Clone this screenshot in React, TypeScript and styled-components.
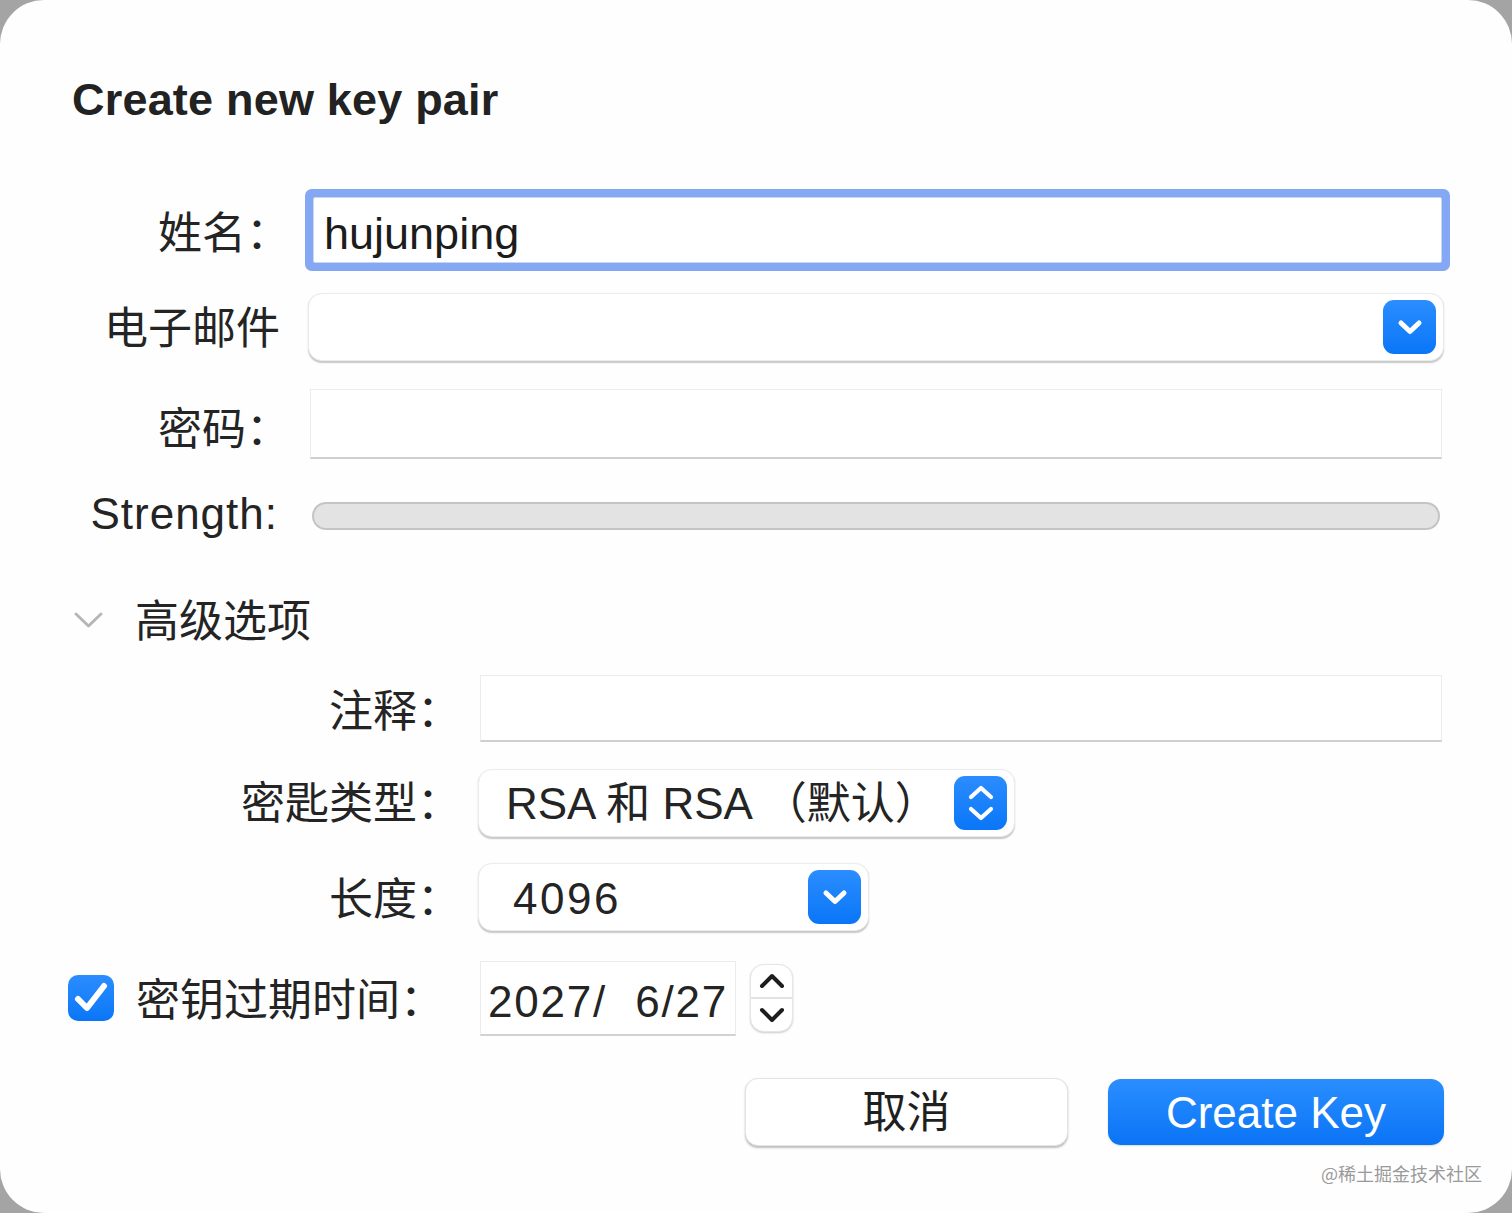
import React from "react";
import styled, { createGlobalStyle } from "styled-components";

const Global = createGlobalStyle`
  html, body {
    margin: 0;
    padding: 0;
    background: #a4a4a4;
    overflow: hidden;
  }
  * { box-sizing: border-box; }
`;

const FONT = `"Liberation Sans", "Noto Sans CJK SC", sans-serif`;

const Dialog = styled.div`
  position: relative;
  width: 1512px;
  height: 1213px;
  background: #fefefe;
  border-radius: 44px;
  padding: 0 68px 0 72px;
  display: flex;
  flex-direction: column;
  font-family: ${FONT};
  color: #242424;
  font-size: 44px;
`;

const Title = styled.h1`
  margin: 74px 0 0 0;
  font-size: 45px;
  line-height: 52px;
  font-weight: 700;
  color: #222;
  letter-spacing: 0.2px;
`;

const Row = styled.div<{ $h: number; $mt: number }>`
  display: flex;
  align-items: center;
  height: ${(p) => p.$h}px;
  margin-top: ${(p) => p.$mt}px;
`;

const Label = styled.div<{ $w: number; $pr?: number; $gap: number; $dy?: number; $ls?: number }>`
  width: ${(p) => p.$w}px;
  flex-shrink: 0;
  text-align: right;
  padding-right: ${(p) => p.$pr ?? 0}px;
  margin-right: ${(p) => p.$gap}px;
  white-space: nowrap;
  line-height: 1;
  letter-spacing: ${(p) => p.$ls ?? 0}px;
  ${(p) =>
    (p.$dy ?? 0) >= 0
      ? `padding-top: ${2 * (p.$dy ?? 0)}px;`
      : `padding-bottom: ${-2 * (p.$dy ?? 0)}px;`}
`;

const FocusInput = styled.div`
  flex: 1;
  height: 66px;
  margin: 1px 2px 0 2px;
  background: #fff;
  border: 1px solid #c9d6ee;
  box-shadow: 0 0 0 8px #84a8f4;
  border-radius: 2px;
  display: flex;
  align-items: center;
  padding: 8px 0 0 10px;
  font-size: 45px;
  color: #1c1c1c;
  line-height: 1;
`;

const PlainInput = styled.div<{ $h: number }>`
  flex: 1;
  height: ${(p) => p.$h}px;
  margin-right: 2px;
  background: #fff;
  border: 1px solid #ececec;
  border-bottom: 2px solid #cfcfcf;
`;

const Popup = styled.div<{ $w?: number; $pl: number }>`
  ${(p) => (p.$w ? `width: ${p.$w}px; flex-shrink: 0;` : "flex: 1;")}
  height: 68px;
  background: #fff;
  border-radius: 14px;
  border: 1px solid #ececec;
  box-shadow: 0 1.5px 1.5px rgba(0, 0, 0, 0.22);
  display: flex;
  align-items: center;
  justify-content: space-between;
  padding: 0 7px 0 ${(p) => p.$pl}px;
  white-space: pre;
  line-height: 1;
`;

const PopupText = styled.span<{ $dy?: number; $ls?: number }>`
  padding-top: ${(p) => 2 * (p.$dy ?? 0)}px;
  letter-spacing: ${(p) => p.$ls ?? 0}px;
`;

const BlueKnob = styled.div`
  width: 53px;
  height: 54px;
  border-radius: 11px;
  background: linear-gradient(180deg, #2b8dff 0%, #0a76f7 100%);
  display: flex;
  align-items: center;
  justify-content: center;
  flex-shrink: 0;
`;

const StrengthBar = styled.div`
  flex: 1;
  height: 28px;
  margin: 0 4px 0 4px;
  border-radius: 14px;
  background: #e3e3e3;
  border: 2px solid #c4c4c4;
`;

const Disclosure = styled.div`
  display: flex;
  align-items: center;
  height: 70px;
  margin-top: 34px;
  gap: 31px;
  padding-left: 1px;
`;

const DisclosureText = styled.span`
  line-height: 1;
  padding-top: 4px;
`;

const CheckLabel = styled.label`
  width: 412px;
  flex-shrink: 0;
  display: flex;
  align-items: center;
  gap: 22px;
  margin-left: -4px;
  line-height: 1;
  white-space: nowrap;
`;

const CheckText = styled.span`
  padding-top: 6px;
`;

const CheckBox = styled.div`
  width: 46px;
  height: 46px;
  border-radius: 10px;
  background: linear-gradient(180deg, #2b8dff 0%, #0a76f7 100%);
  display: flex;
  align-items: center;
  justify-content: center;
`;

const DateField = styled.div`
  width: 256px;
  height: 75px;
  background: #fff;
  border: 1px solid #ececec;
  border-bottom: 2px solid #d2d2d2;
  display: flex;
  align-items: center;
  padding: 8px 0 0 7px;
  white-space: pre;
  line-height: 1;
  letter-spacing: 1.8px;
`;

const Stepper = styled.div`
  width: 43px;
  height: 68px;
  margin-left: 14px;
  border-radius: 14px;
  border: 1px solid #e6e6e6;
  box-shadow: 0 1px 2px rgba(0, 0, 0, 0.2);
  background: #fff;
  display: flex;
  flex-direction: column;
`;

const StepHalf = styled.div<{ $top?: boolean }>`
  flex: 1;
  display: flex;
  align-items: center;
  justify-content: center;
  ${(p) => (p.$top ? "border-bottom: 2px solid #e2e2e2;" : "")}
`;

const ButtonRow = styled.div`
  display: flex;
  justify-content: flex-end;
  align-items: center;
  gap: 40px;
  margin-top: 42px;
`;

const Button = styled.button<{ $primary?: boolean }>`
  font-family: ${FONT};
  font-size: 44px;
  line-height: 1;
  height: ${(p) => (p.$primary ? 66 : 68)}px;
  width: ${(p) => (p.$primary ? 336 : 323)}px;
  border-radius: 13px;
  cursor: default;
  display: flex;
  align-items: center;
  justify-content: center;
  padding: 2px 0 0;
  ${(p) =>
    p.$primary
      ? `
    color: #fff;
    border: none;
    background: linear-gradient(180deg, #2a8eff 0%, #0a74f6 100%);
    box-shadow: 0 1px 2px rgba(0,0,0,0.15);
  `
      : `
    color: #1f1f1f;
    border: 1px solid #e4e4e4;
    background: #fff;
    box-shadow: 0 1.5px 2px rgba(0,0,0,0.25);
  `}
`;

const Watermark = styled.div`
  position: absolute;
  right: 30px;
  bottom: 31px;
  font-size: 18px;
  line-height: 1;
  color: #9a9a9a;
  font-family: "Noto Sans CJK SC", sans-serif;
`;

const KnobChevron = () => (
  <svg width="28" height="28" viewBox="0 0 28 28">
    <path d="M5 10 L14 18.5 L23 10" fill="none" stroke="#fff" strokeWidth="5" strokeLinecap="round" strokeLinejoin="round" />
  </svg>
);

const DisclosureChevron = () => (
  <svg width="31" height="20" viewBox="0 0 31 20">
    <path d="M3 4 L15.5 16 L28 4" fill="none" stroke="#b6b6b6" strokeWidth="3" strokeLinecap="round" strokeLinejoin="round" />
  </svg>
);

const StepChevron = ({ up }: { up?: boolean }) => (
  <svg width="26" height="22" viewBox="0 0 26 22">
    <path
      d={up ? "M3 16 L13 6 L23 16" : "M3 6 L13 16 L23 6"}
      fill="none"
      stroke="#1e1e1e"
      strokeWidth="4"
      strokeLinecap="round"
      strokeLinejoin="round"
    />
  </svg>
);

const UpDown = () => (
  <svg width="30" height="44" viewBox="0 0 30 44">
    <path d="M5 16 L15 7 L25 16" fill="none" stroke="#fff" strokeWidth="4.2" strokeLinecap="round" strokeLinejoin="round" />
    <path d="M5 28 L15 37 L25 28" fill="none" stroke="#fff" strokeWidth="4.2" strokeLinecap="round" strokeLinejoin="round" />
  </svg>
);

const Check = () => (
  <svg width="46" height="46" viewBox="0 0 46 46">
    <path d="M10 24 L19 33 L36 11" fill="none" stroke="#fff" strokeWidth="6" strokeLinecap="round" strokeLinejoin="round" />
  </svg>
);

const TOP_W = 218;
const TOP_GAP = 18;
const ADV_W = 389;
const ADV_GAP = 19;

export default function App() {
  return (
    <>
      <Global />
      <Dialog>
        <Title>Create new key pair</Title>

        <Row $h={70} $mt={68}>
          <Label $w={TOP_W} $gap={TOP_GAP + 3} $dy={5}>姓名：</Label>
          <FocusInput>hujunping</FocusInput>
        </Row>

        <Row $h={70} $mt={28}>
          <Label $w={TOP_W} $pr={10} $gap={TOP_GAP} $dy={2}>电子邮件</Label>
          <Popup $pl={0}>
            <span />
            <BlueKnob>
              <KnobChevron />
            </BlueKnob>
          </Popup>
        </Row>

        <Row $h={70} $mt={27}>
          <Label $w={TOP_W} $gap={TOP_GAP + 2} $dy={6}>密码：</Label>
          <PlainInput $h={70} />
        </Row>

        <Row $h={70} $mt={22}>
          <Label $w={TOP_W} $pr={12} $gap={TOP_GAP} $dy={-2} $ls={1}>Strength:</Label>
          <StrengthBar />
        </Row>

        <Disclosure>
          <DisclosureChevron />
          <DisclosureText>高级选项</DisclosureText>
        </Disclosure>

        <Row $h={70} $mt={18}>
          <Label $w={ADV_W} $gap={ADV_GAP} $dy={4}>注释：</Label>
          <PlainInput $h={67} />
        </Row>

        <Row $h={70} $mt={25}>
          <Label $w={ADV_W} $gap={ADV_GAP - 2} $dy={1}>密匙类型：</Label>
          <Popup $w={537} $pl={27}>
            <PopupText $dy={1}>RSA 和 RSA （默认）</PopupText>
            <BlueKnob>
              <UpDown />
            </BlueKnob>
          </Popup>
        </Row>

        <Row $h={70} $mt={24}>
          <Label $w={ADV_W} $gap={ADV_GAP - 2} $dy={3}>长度：</Label>
          <Popup $w={391} $pl={34}>
            <PopupText $dy={2} $ls={2.5}>4096</PopupText>
            <BlueKnob>
              <KnobChevron />
            </BlueKnob>
          </Popup>
        </Row>

        <Row $h={76} $mt={28}>
          <CheckLabel>
            <CheckBox>
              <Check />
            </CheckBox>
            <CheckText>密钥过期时间：</CheckText>
          </CheckLabel>
          <DateField>2027/  6/27</DateField>
          <Stepper>
            <StepHalf $top>
              <StepChevron up />
            </StepHalf>
            <StepHalf>
              <StepChevron />
            </StepHalf>
          </Stepper>
        </Row>

        <ButtonRow>
          <Button>取消</Button>
          <Button $primary>Create Key</Button>
        </ButtonRow>

        <Watermark>@稀土掘金技术社区</Watermark>
      </Dialog>
    </>
  );
}
